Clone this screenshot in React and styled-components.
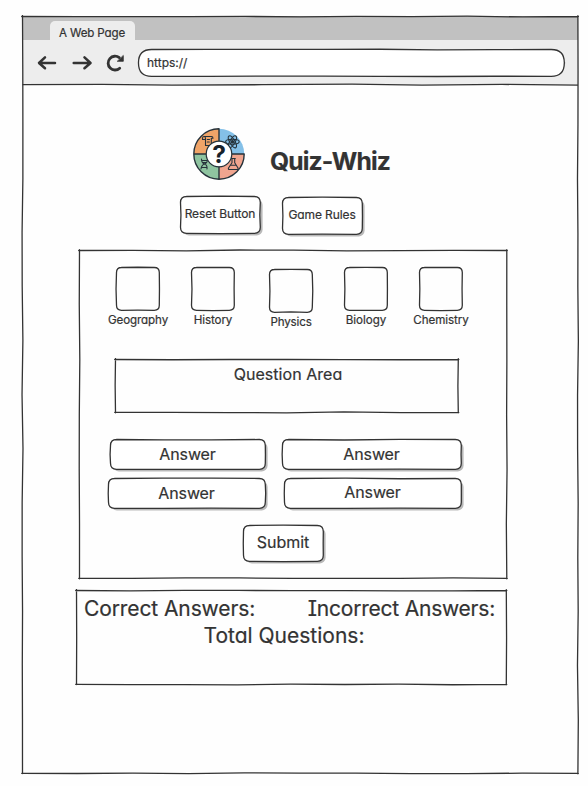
import React from 'react';
import styled, { createGlobalStyle } from 'styled-components';

const INK = '#333333';

const GlobalStyle = createGlobalStyle`
  *, *::before, *::after { box-sizing: border-box; }
  body {
    margin: 0;
    background: #fefefe;
    color: ${INK};
    font-family: Inter, "Open Sans", sans-serif;
    font-feature-settings: "cv11", "cv08";
    -webkit-text-stroke: 0.2px ${INK};
  }
`;

/* ---------- hand-drawn outlines ---------- */

const Outline = styled.svg`
  position: absolute;
  inset: 0;
  overflow: visible;
  pointer-events: none;
  fill: none;
  stroke: ${INK};
  stroke-width: 1.3px;
  stroke-linecap: round;
  stroke-linejoin: round;
`;

const Surface = styled.rect`
  fill: ${(p) => p.$fill};
  stroke: none;
`;

function wobble(seed) {
  let s = seed * 7919 + 13;
  return () => {
    s = (s * 16807) % 2147483647;
    return s / 2147483647 - 0.5;
  };
}

function edge(x1, y1, x2, y2, rnd, amp) {
  const len = Math.hypot(x2 - x1, y2 - y1);
  const n = Math.max(2, Math.round(len / 55));
  const nx = (y2 - y1) / len;
  const ny = (x2 - x1) / len;
  let d = '';
  for (let i = 1; i <= n; i += 1) {
    const off = i === n ? 0 : rnd() * amp;
    const x = x1 + ((x2 - x1) * i) / n + nx * off;
    const y = y1 + ((y2 - y1) * i) / n + ny * off;
    d += `L${x.toFixed(2)} ${y.toFixed(2)}`;
  }
  return d;
}

function Sketch({ w, h, r = 0, seed = 1, shadow = false, fill, amp = 1 }) {
  const rnd = wobble(seed);
  const l = 0.5;
  const t = 0.5;
  const R = w - 0.7;
  const B = h - 0.7;
  let d;
  if (r) {
    d =
      `M${l + r} ${t}` + edge(l + r, t, R - r, t, rnd, amp) +
      `Q${R} ${t} ${R} ${t + r}` + edge(R, t + r, R, B - r, rnd, amp) +
      `Q${R} ${B} ${R - r} ${B}` + edge(R - r, B, l + r, B, rnd, amp) +
      `Q${l} ${B} ${l} ${B - r}` + edge(l, B - r, l, t + r, rnd, amp) +
      `Q${l} ${t} ${l + r} ${t}`;
  } else {
    d =
      `M${l - 0.8} ${t}` + edge(l, t, R + 0.5, t, rnd, amp) +
      `M${R} ${t - 0.8}` + edge(R, t, R, B + 0.5, rnd, amp) +
      `M${R + 0.5} ${B}` + edge(R, B, l - 0.8, B, rnd, amp) +
      `M${l} ${B + 0.5}` + edge(l, B, l, t - 0.8, rnd, amp);
  }
  return (
    <Outline width={w} height={h}>
      {shadow && <Surface $fill="#b9b9b9" x="3" y="3" width={w - 1.4} height={h - 1.4} rx={r} />}
      {fill && <Surface $fill={fill} x={l} y={t} width={R - l} height={B - t} rx={r} />}
      <path d={d} />
    </Outline>
  );
}

/* ---------- browser window ---------- */

const Page = styled.div`
  width: 588px;
  height: 786px;
  padding: 16px 0 0 22px;
  overflow: hidden;
`;

const Window = styled.div`
  position: relative;
  display: flex;
  flex-direction: column;
  width: 556px;
  height: 758px;
`;

const TabStrip = styled.div`
  display: flex;
  align-items: flex-end;
  height: 24px;
  padding-left: 28px;
  background: #c1c1c1;
`;

const Tab = styled.div`
  display: flex;
  justify-content: center;
  width: 85px;
  height: 19px;
  padding: 4px 1px 0 0;
  border-radius: 5px 5px 0 0;
  background: #ededed;
`;

const Toolbar = styled.div`
  display: flex;
  align-items: center;
  height: 45px;
  padding-left: 15px;
  background: #ededed;
`;

const NavIcon = styled.svg`
  width: 20px;
  height: 20px;
  margin-right: ${(p) => p.$gap}px;
  fill: none;
  stroke: ${INK};
  stroke-width: 2.5px;
  stroke-linecap: round;
  stroke-linejoin: round;
`;

const Address = styled.div`
  position: relative;
  display: flex;
  align-items: center;
  width: 427px;
  height: 28px;
  padding-left: 9px;
`;

const Rule = styled.svg`
  display: block;
  height: 2px;
  margin-bottom: -2px;
  overflow: visible;
  fill: none;
  stroke: ${INK};
  stroke-width: 1.3px;
`;

/* ---------- text ---------- */

const Text = styled.span`
  position: relative;
  flex: none;
  white-space: nowrap;
  font-size: ${(p) => p.$size}px;
  line-height: ${(p) => p.$line}px;
  letter-spacing: ${(p) => p.$track || 0}px;
`;

const Title = styled.h1`
  margin: 15px 0 0;
  font-size: 24.6px;
  line-height: 36px;
  font-weight: 700;
  letter-spacing: -0.85px;
  white-space: nowrap;
`;

/* ---------- quiz ---------- */

const Header = styled.header`
  display: flex;
  gap: 25px;
  height: 52px;
  margin: 43px 0 0 171px;
`;

const Logo = styled.svg`
  flex: none;
  width: 52px;
  height: 52px;
  -webkit-text-stroke: 0;
`;

const LogoMark = styled.text`
  font-size: 24.5px;
  font-weight: 700;
  text-anchor: middle;
  fill: #17222b;
`;

const Actions = styled.div`
  display: flex;
  align-items: flex-start;
  gap: 21px;
  height: 54px;
  padding: 16px 0 0 158px;
`;

const Button = styled.button`
  position: relative;
  display: flex;
  align-items: center;
  justify-content: center;
  flex: none;
  width: ${(p) => p.$w}px;
  height: ${(p) => p.$h}px;
  margin: ${(p) => p.$margin || 0};
  padding: 0 1px ${(p) => p.$lift || 0}px 0;
  border: 0;
  background: none;
  color: inherit;
  font-family: inherit;
  font-feature-settings: inherit;
`;

const Panel = styled.section`
  position: relative;
  display: flex;
  flex-direction: column;
  width: 429px;
  height: 329px;
  margin: 16px 0 0 57px;
`;

const Categories = styled.div`
  display: flex;
  gap: 31px;
  height: 92px;
  padding: 17px 0 0 37px;
`;

const Category = styled.div`
  display: flex;
  flex-direction: column;
  align-items: center;
  gap: 2px;
  width: 44px;
  margin: ${(p) => p.$margin || 0};
`;

const Tile = styled.div`
  position: relative;
  width: 44px;
  height: 44px;
`;

const Question = styled.div`
  position: relative;
  display: flex;
  justify-content: center;
  width: 344px;
  height: 54px;
  margin: 17px 0 26px 36px;
  padding: 5px 0 0 2px;
`;

const AnswerRow = styled.div`
  display: flex;
  gap: ${(p) => p.$gap}px;
  height: 39px;
  padding-left: ${(p) => p.$indent}px;
`;

const Score = styled.section`
  position: relative;
  width: 431px;
  height: 95px;
  margin: 11px 0 0 54px;
  padding: 5px 12px 0 8px;
`;

const ScoreLine = styled.div`
  display: flex;
  justify-content: ${(p) => p.$justify};
  padding-right: ${(p) => p.$end || 0}px;
`;

const categories = [
  { name: 'Geography', track: -0.1 },
  { name: 'History', track: -0.1 },
  { name: 'Physics', track: -0.15, margin: '2px 0 0 3px' },
  { name: 'Biology', track: -0.05 },
  { name: 'Chemistry', track: -0.05 },
];

function Caption({ children, size = 16, line = 20, track }) {
  return <Text $size={size} $line={line} $track={track}>{children}</Text>;
}

function SketchButton({ label, w, h, seed, size, line, lift, margin, track = -0.1 }) {
  return (
    <Button type="button" $w={w} $h={h} $lift={lift} $margin={margin}>
      <Sketch w={w} h={h} r={6} seed={seed} shadow fill="#ffffff" />
      <Caption size={size} line={line} track={track}>{label}</Caption>
    </Button>
  );
}

function QuizLogo() {
  return (
    <Logo viewBox="0 0 52 52">
      <path d="M26 26V.8A25.2 25.2 0 0 0 .8 26Z" fill="#f0a468" />
      <path d="M26 26V.8A25.2 25.2 0 0 1 51.2 26Z" fill="#84c0e8" />
      <path d="M26 26H.8A25.2 25.2 0 0 0 26 51.2Z" fill="#8fc4a0" />
      <path d="M26 26H51.2A25.2 25.2 0 0 1 26 51.2Z" fill="#f0a58f" />
      <g fill="none" stroke="#26323a" strokeWidth="1.1" strokeLinecap="round" strokeLinejoin="round">
        <path d="M26 .8A25.2 25.2 0 0 0 26 51.2A25.2 25.2 0 0 0 51.2 26M26 .8V51.2M.8 26H51.2" strokeWidth="1.4" />
        <path d="M12.500 17.500V10.400Q12.500 8.500 11 8.500T9.500 10.300V11.500H12.500M11 8.500H18.400Q20 8.500 20 10.300H18.300V16M12.500 17.500H16M14.300 11.500H16.500M14.300 14H16.300" />
        <ellipse cx="39.400" cy="13.800" rx="6.800" ry="2.500" />
        <ellipse cx="39.400" cy="13.800" rx="6.800" ry="2.500" transform="rotate(60 39.4 13.8)" />
        <ellipse cx="39.400" cy="13.800" rx="6.800" ry="2.500" transform="rotate(120 39.4 13.8)" />
        <circle cx="39.400" cy="13.800" r="1.200" fill="#26323a" />
        <path d="M8.500 31q0 4 3 5t2.500 5M14.500 31q0 4-3 5T8 41M8.800 32.500h5M9 39.500h5M10 34.500h3" />
        <path d="M38.300 30.500h4M39 30.500v4.300L35.500 40q-.6 1.500 1 1.500h7.500q1.600 0 1-1.500L41.700 34.800V30.500M37.300 37.300h6" />
      </g>
      <circle cx="26" cy="26" r="12.800" fill="#fff" stroke="#26323a" strokeWidth="1.200" />
      <LogoMark x="26.100" y="35">?</LogoMark>
    </Logo>
  );
}

export default function App() {
  return (
    <>
      <GlobalStyle />
      <Page>
        <Window>
          <TabStrip>
            <Tab><Caption size={11.6} line={16} track={-0.15}>A Web Page</Caption></Tab>
          </TabStrip>
          <Toolbar>
            <NavIcon $gap={15} viewBox="0 0 20 20"><path d="M18 10H2.500M8 4.300L2 10L8 15.300" /></NavIcon>
            <NavIcon $gap={13} viewBox="0 0 20 20"><path d="M1.700 10H17.500M12.500 4.300L18.500 10L12.500 15.300" /></NavIcon>
            <NavIcon $gap={13} viewBox="0 0 20 20">
              <path d="M14.300 4.700A6.900 6.900 0 1 0 14.700 15.200" strokeWidth="2.800" />
              <path d="M18.300 2.800V8.300H12.600Z" fill={INK} strokeWidth=".8" />
            </NavIcon>
            <Address>
              <Sketch w={427} h={28} r={13.1} seed={4} fill="#ffffff" amp={0.8} />
              <Caption size={12} line={16}>https://</Caption>
            </Address>
          </Toolbar>
          <Rule width="556"><path d="M.5 -.4L80 -.6L150 .2L240 -.3L330 -.8L400 .1L480 -.6L556 .2" /></Rule>
          <Sketch w={556.6} h={758} seed={9} />

          <Header>
            <QuizLogo />
            <Title>Quiz-Whiz</Title>
          </Header>
          <Actions>
            <SketchButton label="Reset Button" w={81} h={38} seed={2} size={12} line={16} lift={3} />
            <SketchButton label="Game Rules" w={81} h={38} seed={3} size={12} line={16} lift={3} margin="1px 0 0" />
          </Actions>

          <Panel>
            <Sketch w={428.5} h={329} seed={5} />
            <Categories>
              {categories.map((c, i) => (
                <Category key={c.name} $margin={c.margin}>
                  <Tile><Sketch w={44} h={44} r={5} seed={20 + i} /></Tile>
                  <Caption size={11.6} line={14} track={c.track}>{c.name}</Caption>
                </Category>
              ))}
            </Categories>
            <Question>
              <Sketch w={344} h={54} seed={12} />
              <Caption track={0.05}>Question Area</Caption>
            </Question>
            <AnswerRow $indent={31} $gap={16}>
              <SketchButton label="Answer" w={156} h={31} seed={31} lift={1} />
              <SketchButton label="Answer" w={180} h={31} seed={32} lift={1} />
            </AnswerRow>
            <AnswerRow $indent={29} $gap={18}>
              <SketchButton label="Answer" w={158} h={31} seed={33} lift={1} />
              <SketchButton label="Answer" w={178} h={31} seed={34} lift={3} />
            </AnswerRow>
            <SketchButton label="Submit" w={81} h={37} seed={35} lift={3} margin="8px 0 0 164px" track={0} />
          </Panel>

          <Score>
            <Sketch w={431} h={95} seed={15} />
            <ScoreLine $justify="space-between">
              <Caption size={21} line={27} track={-0.1}>Correct Answers:</Caption>
              <Caption size={21} line={27} track={-0.22}>Incorrect Answers:</Caption>
            </ScoreLine>
            <ScoreLine $justify="center" $end={11}>
              <Caption size={21} line={27}>Total Questions:</Caption>
            </ScoreLine>
          </Score>
        </Window>
      </Page>
    </>
  );
}
